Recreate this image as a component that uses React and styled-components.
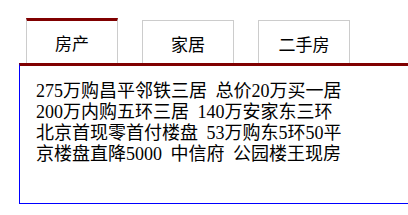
import React from "react";
import styled, { createGlobalStyle } from "styled-components";

const GlobalStyle = createGlobalStyle`
  html, body {
    margin: 0;
    padding: 0;
    overflow: hidden;
    background: #fff;
  }
  body {
    font-family: "Liberation Serif", "Noto Sans CJK SC", serif;
  }
`;

const Wrapper = styled.div`
  width: 408px;
  height: 215px;
  overflow: hidden;
  padding: 18px 0 0 19px;
  box-sizing: border-box;
`;

const TabBar = styled.ul`
  display: flex;
  align-items: flex-end;
  gap: 24px;
  margin: 0 0 0 7px;
  padding: 0;
  list-style: none;
`;

const Tab = styled.li`
  box-sizing: border-box;
  width: 92px;
  height: ${(p) => (p.$active ? "45px" : "43px")};
  border: 1px solid #cccccc;
  border-bottom: none;
  border-top: ${(p) => (p.$active ? "3px solid #800000" : "1px solid #cccccc")};
  display: flex;
  align-items: center;
  justify-content: center;
  padding-top: ${(p) => (p.$active ? "0" : "2px")};
  font-size: 17px;
  color: #000;
  cursor: pointer;
`;

const Panel = styled.div`
  box-sizing: border-box;
  width: 420px;
  height: 141px;
  border-top: 3px solid #800000;
  border-left: 1px solid #0000ff;
  border-bottom: 1px solid #0000ff;
  padding: 15px 0 0 16px;
`;

const NewsLine = styled.a`
  display: block;
  font-size: 18px;
  line-height: 21px;
  color: #000;
  text-decoration: none;
  white-space: pre;
  word-spacing: 4px;
`;

const tabs = ["房产", "家居", "二手房"];

const news = [
  "275万购昌平邻铁三居 总价20万买一居",
  "200万内购五环三居 140万安家东三环",
  "北京首现零首付楼盘 53万购东5环50平",
  "京楼盘直降5000 中信府 公园楼王现房",
];

export default function App() {
  return (
    <>
      <GlobalStyle />
      <Wrapper>
        <TabBar>
          {tabs.map((t, i) => (
            <Tab key={t} $active={i === 0}>
              {t}
            </Tab>
          ))}
        </TabBar>
        <Panel>
          {news.map((n) => (
            <NewsLine key={n} href="#">
              {n}
            </NewsLine>
          ))}
        </Panel>
      </Wrapper>
    </>
  );
}
